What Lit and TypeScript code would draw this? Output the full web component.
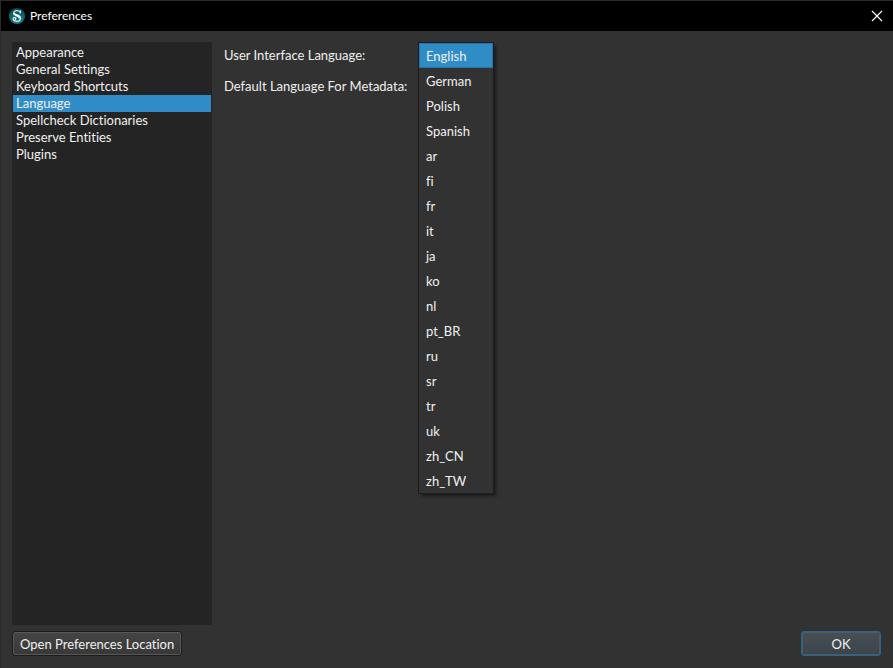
import { LitElement, html, css, svg } from "lit";
import { customElement, state } from "lit/decorators.js";

const SECTIONS = [
  "Appearance",
  "General Settings",
  "Keyboard Shortcuts",
  "Language",
  "Spellcheck Dictionaries",
  "Preserve Entities",
  "Plugins",
];

const LANGUAGES = [
  "English", "German", "Polish", "Spanish", "ar", "fi", "fr", "it", "ja",
  "ko", "nl", "pt_BR", "ru", "sr", "tr", "uk", "zh_CN", "zh_TW",
];

const logo = svg`
  <defs>
    <linearGradient id="disc" x1="0" y1="0" x2="0" y2="1">
      <stop offset="0" stop-color="#0b4a55" />
      <stop offset="1" stop-color="#12808d" />
    </linearGradient>
  </defs>
  <circle cx="8" cy="8" r="8" fill="url(#disc)" />
  <path d="M11.400 2.300v3.200M11 4.200C10.200 3.200 9.200 2.700 7.700 2.700 5.800 2.700 4.600 3.700 4.600 5.200"
    fill="none" stroke="#dfe9ea" stroke-width="1.200" />
  <path d="M4.900 5c.2 2.700 6.200 2.300 6.200 5.400" fill="none" stroke="#f4f7f7" stroke-width="2.400" />
  <path d="M11.500 10c0 2.100-1.400 3.300-3.500 3.300-2.100 0-3.800-.8-3.800-2.600 0-1.300 1.800-1.600 2.500-.6.4.9-.2 1.500-.9 1.400"
    fill="none" stroke="#dfe9ea" stroke-width="1.300" />
`;

@customElement("app-root")
export class AppRoot extends LitElement {
  @state() private section = "Language";
  @state() private language = "English";

  static styles = css`
    :host {
      display: flex;
      flex-direction: column;
      box-sizing: border-box;
      min-height: 100vh;
      background: #323232;
      color: #f0f0f0;
      font: 13px/17px Lato, "Open Sans", sans-serif;
      font-variant-ligatures: none;
      border-left: 1px solid #2a2a2a;
    }
    * { box-sizing: border-box; }
    button, select {
      font: inherit;
      font-variant-ligatures: none;
      color: inherit;
      margin: 0;
    }
    .titlebar {
      display: flex;
      align-items: center;
      gap: 5px;
      height: 31px;
      padding: 0 10px 0 8px;
      background: #000;
      border-top: 1px solid #2a2a2a;
    }
    .logo { width: 16px; height: 16px; }
    .title {
      flex: 1;
      margin: 0;
      font-size: 12px;
      font-weight: 400;
      line-height: 16px;
      color: #fff;
    }
    .close { display: flex; padding: 0; border: 0; background: none; }
    .cross { width: 12px; height: 12px; }
    .body {
      flex: 1;
      display: flex;
      gap: 12px;
      padding: 11px 12px 6px 11px;
    }
    .sections {
      width: 200px;
      padding: 2px 1px;
      background: #242424;
      display: flex;
      flex-direction: column;
    }
    .section {
      height: 17px;
      padding: 0 3px;
      border: 0;
      background: none;
      text-align: left;
    }
    .section.active { background: #308cc6; }
    .form {
      display: grid;
      grid-template-columns: 188px 76px;
      grid-auto-rows: 25px;
      align-content: start;
      align-items: center;
      gap: 6px;
      padding-top: 1px;
      white-space: nowrap;
    }
    .field { position: relative; height: 25px; }
    .combo {
      width: 100%;
      height: 25px;
      background: #323232;
      border: 1px solid #1d1d1d;
    }
    .popup {
      position: absolute;
      z-index: 1;
      top: -1px;
      left: 0;
      width: 100%;
      padding: 0;
      border: 1px solid #1d1d1d;
      border-radius: 0;
      outline: 0;
      overflow: hidden;
      background: #323232;
      box-shadow: 3px 3px 3px -1px #1a1a1a;
    }
    .choice {
      height: 25px;
      min-height: 25px;
      padding: 5px 7px 4px;
      -webkit-text-fill-color: #f0f0f0;
    }
    .choice:checked {
      background: linear-gradient(#308cc6, #308cc6);
      box-shadow: inset 0 0 0 1px #2674a6;
    }
    .footer {
      display: flex;
      justify-content: space-between;
      padding: 0 12px 12px 11px;
    }
    .action {
      height: 25px;
      padding: 1px 7px 0;
      border: 1px solid #1c1c1c;
      border-radius: 3px;
      background: linear-gradient(#454545, #383838);
      box-shadow: inset 0 0 0 1px #585858;
    }
    .action.primary {
      width: 80px;
      border-color: #1f6a9b;
      background: linear-gradient(#475057, #3b444b);
    }
  `;

  private pick(event: Event) {
    this.language = (event.target as HTMLSelectElement).value;
  }

  render() {
    return html`
      <header class="titlebar">
        <svg class="logo" viewBox="0 0 16 16" aria-hidden="true">${logo}</svg>
        <h1 class="title">Preferences</h1>
        <button class="close" aria-label="Close">
          <svg class="cross" viewBox="0 0 12 12" aria-hidden="true">
            <path d="M1 1l10 10M11 1L1 11" stroke="#fff" stroke-width="1.2" />
          </svg>
        </button>
      </header>
      <main class="body">
        <nav class="sections" aria-label="Preference sections">
          ${SECTIONS.map((name) => html`
            <button
              class="section ${name === this.section ? "active" : ""}"
              @click=${() => (this.section = name)}
            >${name}</button>`)}
        </nav>
        <section class="form">
          <label for="interface">User Interface Language:</label>
          <div class="field">
            <select id="interface" class="popup" size="18" @change=${this.pick}>
              ${LANGUAGES.map((name) => html`
                <option class="choice" ?selected=${name === this.language}>${name}</option>`)}
            </select>
          </div>
          <label for="metadata">Default Language For Metadata:</label>
          <select id="metadata" class="combo"><option>English</option></select>
        </section>
      </main>
      <footer class="footer">
        <button class="action">Open Preferences Location</button>
        <button class="action primary">OK</button>
      </footer>
    `;
  }
}
